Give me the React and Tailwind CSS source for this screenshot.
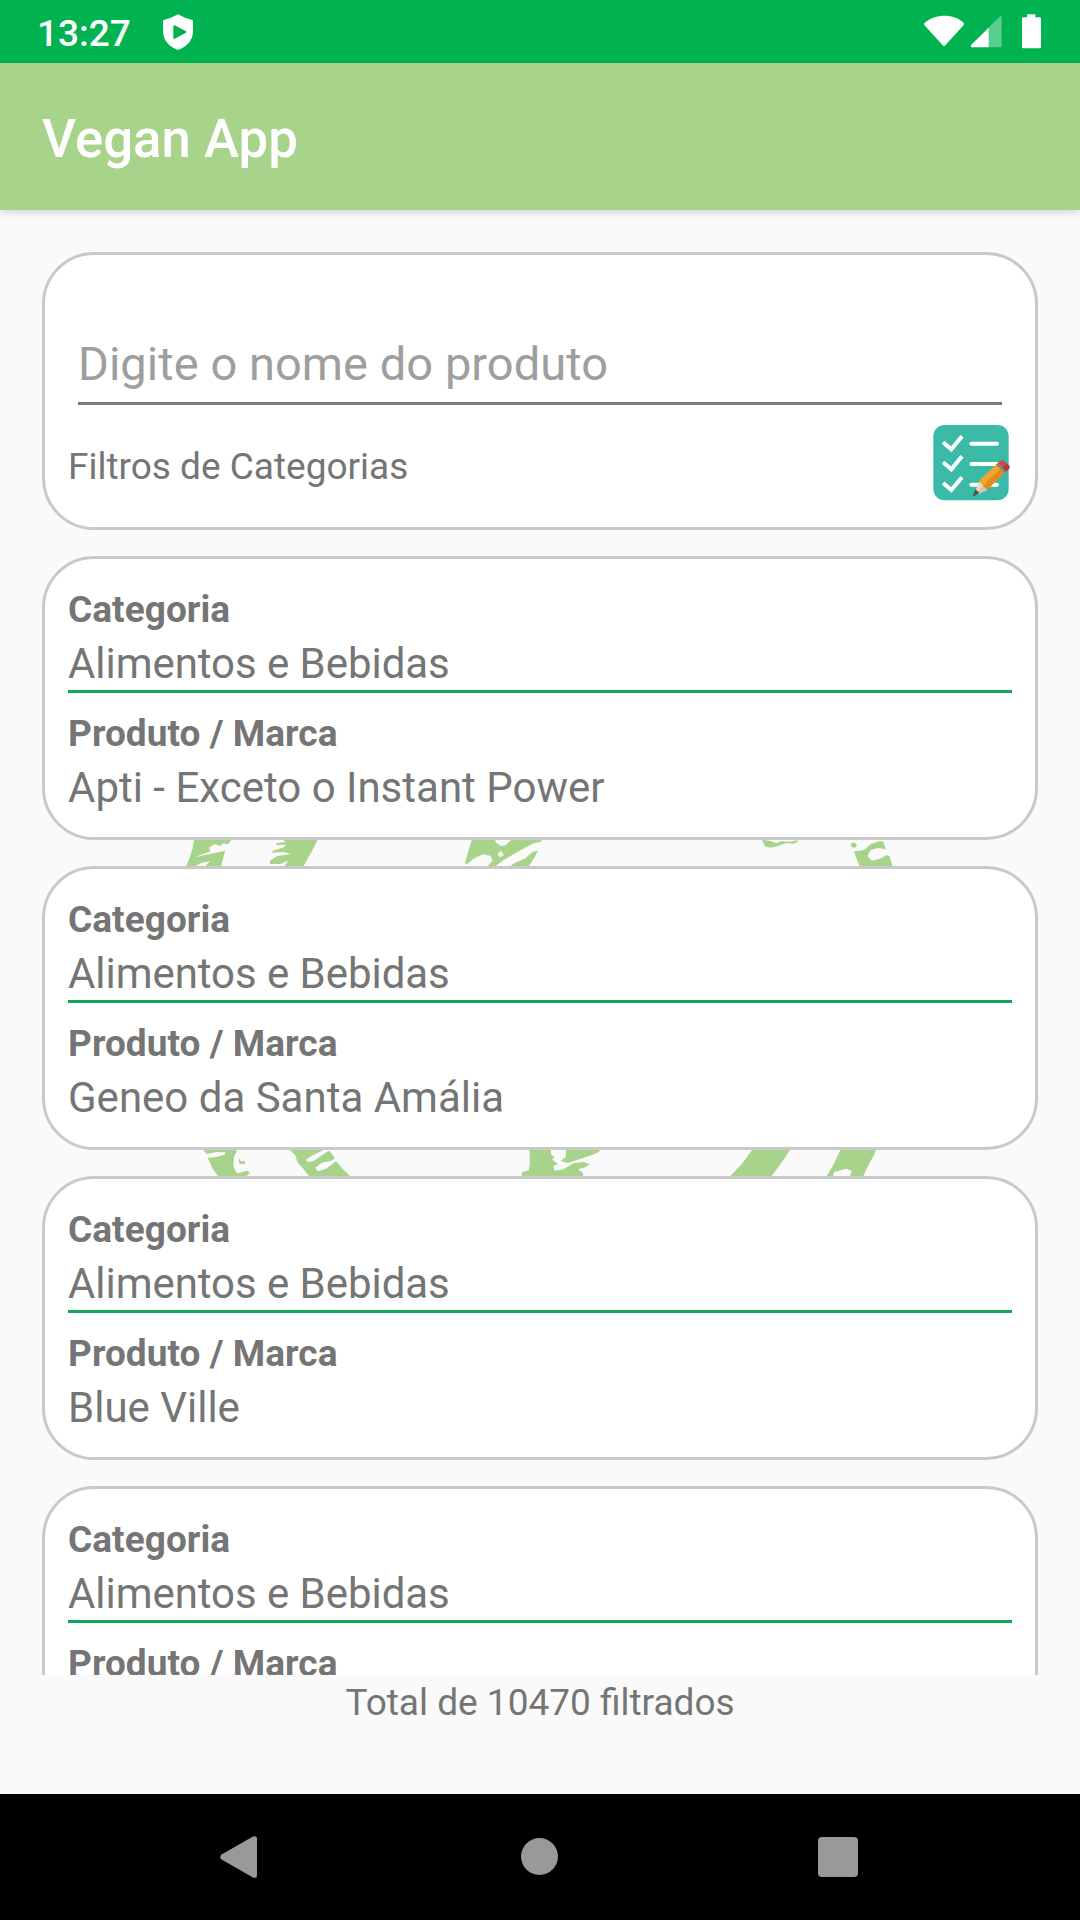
import React, { useState } from "react";

const products = [
  { id: 1, category: "Alimentos e Bebidas", name: "Apti - Exceto o Instant Power" },
  { id: 2, category: "Alimentos e Bebidas", name: "Geneo da Santa Amália" },
  { id: 3, category: "Alimentos e Bebidas", name: "Blue Ville" },
  { id: 4, category: "Alimentos e Bebidas", name: "" },
];

const StatusBar = () => (
  <div className="h-[63px] shrink-0 bg-[#00b350] flex items-center justify-between pl-[37px] pr-[39px]">
    <div className="flex items-center">
      <span className="w-[126px] text-[37px] leading-[44px] font-medium text-white pt-[4px]">13:27</span>
      <svg className="w-[30px] h-[36px]" viewBox="0 0 90 108">
        <path
          fill="#fff"
          fillRule="evenodd"
          d="M45 1 Q65 13 86 17 Q90 18 90 22 V52 C90 82 68 100 45 108 C22 100 0 82 0 52 V22 Q0 18 4 17 Q25 13 45 1 Z M31 37 V72 Q31 76 35 74 L69 56 Q72 54 69 52 L35 34 Q31 33 31 37 Z"
        />
      </svg>
    </div>
    <svg className="w-[117px] h-[36px]" viewBox="0 0 351 108">
      <path fill="#fff" d="M2 27 C34 -2 90 -2 119 27 Q121 30 119 33 L64 94 Q60 98 56 94 L1 33 Q-1 30 2 27 Z" />
      <path fill="#fff" fillOpacity="0.35" d="M193 41 L228 7 Q233 5 233 10 V100 H193 Z" />
      <path fill="#fff" d="M194 41 V100 H142 Q138 96 142 92 Z" />
      <path fill="#fff" d="M309 1 H334 V10 H347 Q351 10 351 14 V99 Q351 103 347 103 H298 Q294 103 294 99 V14 Q294 10 298 10 H309 Z" />
    </svg>
  </div>
);

const ChecklistIcon = () => (
  <svg className="w-[78px] h-[76px]" viewBox="99 74 234 228">
    <rect x="100" y="74" width="226" height="226" rx="34" fill="#3cbaa8" />
    <g fill="none" stroke="#fff" strokeWidth="12">
      <g strokeLinejoin="miter">
        <path d="M129 126 L154 147 L186 108" />
        <path d="M129 186 L154 207 L186 168" />
        <path d="M129 248 L154 269 L186 231" />
      </g>
      <g strokeLinecap="round">
        <path d="M214 130 H291" />
        <path d="M214 191 H291" />
        <path d="M214 253 H291" />
      </g>
    </g>
    <path fill="#e8dcc0" d="M238 242 L262 268 L236 281 L226 273 Z" />
    <path fill="#d3c6aa" d="M250 255 L262 268 L236 281 L231 277 Z" />
    <path fill="#4b4f52" d="M226 267 L238 277 L222 288 Q218 287 220 283 Z" />
    <path fill="#f4a62a" d="M236 242 L294 188 L307 201 L249 256 Z" />
    <path fill="#e58b1c" d="M249 256 L307 201 L318 213 L262 269 Z" />
    <path fill="#8e8278" d="M288 193 L295 186 L321 211 L314 218 Z" />
    <path fill="#d04b4b" d="M294 188 L304 180 Q308 178 313 182 L320 189 L307 201 Z" />
    <path fill="#b03a3c" d="M307 201 L320 189 L328 196 Q331 200 328 204 L319 214 Z" />
  </svg>
);

// Round stamp behind the list, only visible between the cards
const StampBackground = () => (
  <svg className="absolute left-[160px] top-[610px] w-[760px] h-[370px]" viewBox="0 0 2280 1110">
    <g fill="#a8d38a">
      <path d="M104 50 H220 L205 73 L190 70 L180 78 L165 72 L148 82 L150 95 L122 104 L104 112 L150 102 L196 92 L182 142 H133 L150 124 L125 128 L100 142 H77 L88 116 L97 88 Z" />
      <path d="M352 50 H478 L453 98 L429 142 H372 L384 122 L362 132 L330 132 L330 122 L352 108 L393 102 L372 96 L336 98 L338 92 L372 82 L378 74 L346 75 L352 69 L378 66 Z" />
      <path d="M938 50 H1003 L1008 68 L1022 78 L1036 76 L1054 60 L1066 50 H1148 L1144 65 L1120 70 L1090 86 L1058 104 L1030 121 L1002 142 H980 L998 122 L992 108 L970 102 L940 116 L920 134 L915 128 L925 94 Z" />
      <path d="M1134 92 L1124 112 L1104 142 H1048 L1062 130 L1094 116 L1118 96 Z" />
      <path d="M1806 60 L1830 62 L1848 69 L1864 64 L1892 65 L1913 60 L1912 67 L1900 71 L1880 69 L1852 79 L1830 83 L1815 79 Z" />
      <path d="M2072 72 L2082 67 L2091 75 L2086 83 L2075 82 Z" />
      <path d="M2082 94 L2102 92 L2116 88 L2132 72 L2160 63 L2170 65 L2178 88 L2154 84 L2132 90 L2122 108 L2136 122 L2160 116 L2180 105 L2188 108 L2199 142 H2100 L2090 116 Z" />
    </g>
    <path fill="#fafafa" d="M1012 102 L1020 112 L1032 104 L1022 93 Z" />
    <g fill="#a8d38a" transform="translate(0 930)">
      <path d="M120 50 H226 L230 65 L222 80 L220 108 L230 130 L240 128 L262 122 L270 128 L256 142 H176 L158 116 L143 83 L166 82 L194 74 L196 67 L170 66 L140 72 L133 63 Z" />
      <path d="M238 84 L242 94 L256 94 L254 102 L240 102 L236 94 Z" />
      <path d="M380 50 H494 L486 62 L450 80 L438 90 L444 97 L462 92 L500 66 L508 62 L525 84 L514 92 L486 98 L466 113 L474 124 L498 116 L528 94 L548 116 L574 142 H450 L430 116 L412 96 L406 76 Z" />
      <path d="M1108 50 H1171 L1174 74 L1184 82 L1176 88 L1186 96 L1194 102 L1180 108 L1184 122 L1210 118 L1240 100 L1270 96 L1290 102 L1276 112 L1254 118 L1270 130 L1268 142 H1084 L1086 126 L1106 121 L1110 100 Z" />
      <path d="M1218 50 H1322 L1318 65 L1294 76 L1262 86 L1224 99 L1202 93 L1218 80 Z" />
      <path d="M1783 50 H1896 L1872 88 L1832 142 H1707 L1746 101 Z" />
      <path d="M2046 50 H2151 L2142 76 L2128 100 L2108 142 H2068 L2076 124 L2060 116 L2042 121 L2022 126 L2018 142 H1998 L2018 108 Z" />
    </g>
  </svg>
);

const ProductCard = ({ product }) => (
  <div className="h-[284px] shrink-0 rounded-[52px] border-3 border-[#c9c9c9] bg-white px-[23px] pt-[26px] text-[#757575]">
    <div className="text-[37px] leading-[50px] font-bold tracking-[0.05px]">Categoria</div>
    <div className="h-[58px] pt-[2px] text-[42px] leading-[54px] tracking-[-0.05px] border-b-3 border-[#14a75a]">
      {product.category}
    </div>
    <div className="mt-[16px] text-[37px] leading-[50px] font-bold tracking-[0.05px]">Produto / Marca</div>
    <div className="mt-[2px] text-[42px] leading-[54px]">{product.name}</div>
  </div>
);

const App = () => {
  const [search, setSearch] = useState("");

  return (
    <div className="w-[1080px] h-[1920px] overflow-hidden flex flex-col bg-[#fafafa] font-[Roboto,sans-serif]">
      <StatusBar />
      <header className="relative z-10 h-[147px] shrink-0 bg-[#a8d38a] flex items-center px-[42px] shadow-[0_3px_8px_rgba(0,0,0,0.14)]">
        <h1 className="pt-[5px] text-[52.75px] leading-[62px] font-medium text-white">Vegan App</h1>
      </header>

      <main className="relative flex-1 min-h-0 flex flex-col px-[42px] pt-[42px]">
        <StampBackground />
        <div className="relative h-[278px] shrink-0 rounded-[52px] border-3 border-[#c9c9c9] bg-white px-[23px] pt-[77px]">
          <input
            type="text"
            placeholder="Digite o nome do produto"
            value={search}
            onChange={(e) => setSearch(e.target.value)}
            className="block mx-[10px] w-[924px] h-[73px] pb-[8px] border-b-3 border-[#7a7a7a] text-[47px] tracking-[0.05px] text-[#757575] placeholder:text-[#9e9e9e] outline-none"
          />
          <div className="mt-[20px] flex items-center justify-between pr-px">
            <span className="pt-[8px] text-[37px] leading-[50px] text-[#757575]">Filtros de Categorias</span>
            <button type="button">
              <ChecklistIcon />
            </button>
          </div>
        </div>

        <div className="relative mt-[26px] h-[1119px] shrink-0 overflow-hidden flex flex-col gap-[26px]">
          {products.map((product) => (
            <ProductCard key={product.id} product={product} />
          ))}
        </div>

        <p className="relative pt-[3px] text-center text-[37px] leading-[50px] text-[#757575]">
          Total de 10470 filtrados
        </p>
      </main>

      <nav className="h-[126px] shrink-0 bg-black flex items-center justify-between pl-[219px] pr-[222px] pb-[1px]">
        <svg className="w-[38px] h-[42px]" viewBox="0 0 38 42">
          <path fill="#999" d="M34 0.6 Q38 -1 38 3 V39 Q38 43 34 41.4 L2.5 23.5 Q0 21 2.5 18.5 Z" />
        </svg>
        <div className="ml-[4px] w-[37px] h-[37px] rounded-full bg-[#999]" />
        <div className="w-[40px] h-[40px] rounded-[4px] bg-[#999]" />
      </nav>
    </div>
  );
};

export default App;
